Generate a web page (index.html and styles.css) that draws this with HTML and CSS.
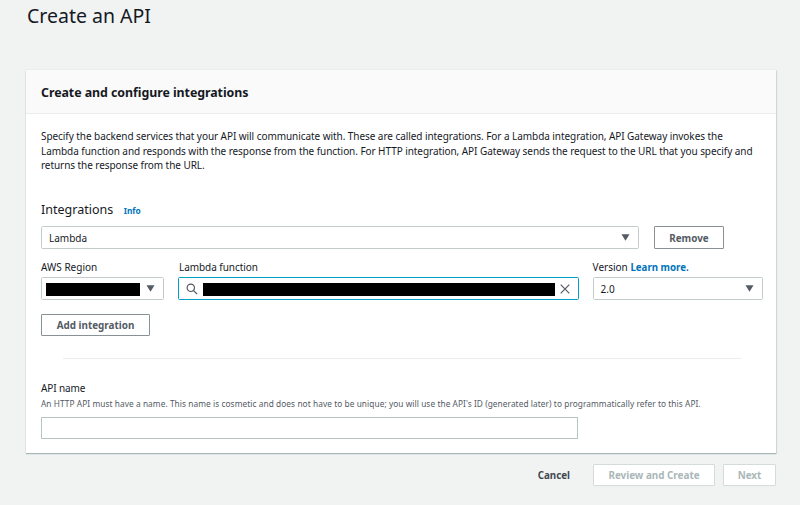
FILE: index.html
```html
<!DOCTYPE html>
<html lang="en">
<head>
<meta charset="utf-8">
<title>Create an API</title>
<link rel="stylesheet" href="styles.css">
</head>
<body>
<main class="page">
  <h1 class="page-title">Create an API</h1>
  <section class="card">
    <header class="card-header"><h2>Create and configure integrations</h2></header>
    <div class="card-body">
      <p class="intro">Specify the backend services that your API will communicate with. These are called integrations. For a Lambda integration, API Gateway invokes the<br>Lambda function and responds with the response from the function. For HTTP integration, API Gateway sends the request to the URL that you specify and<br>returns the response from the URL.</p>
      <div class="section-title"><h3>Integrations</h3><a class="info">Info</a></div>
      <div class="type-row">
        <div class="field select"><span>Lambda</span><svg class="caret" viewBox="0 0 8 7"><path d="M0 .3h8L4 6.7z"/></svg></div>
        <button class="btn remove">Remove</button>
      </div>
      <div class="config-row">
        <div>
          <div class="label">AWS Region</div>
          <div class="field select region"><i class="redacted"></i><svg class="caret" viewBox="0 0 8 7"><path d="M0 .3h8L4 6.7z"/></svg></div>
        </div>
        <div>
          <div class="label fn-label">Lambda function</div>
          <div class="field search"><svg class="glass" viewBox="0 0 12 12"><circle cx="4.8" cy="4.8" r="3.7"/><path d="M7.5 7.5l3.6 3.6"/></svg><i class="redacted"></i><svg class="clear" viewBox="0 0 10 10"><path d="M.7.7l8.6 8.6M9.3.7L.7 9.3"/></svg></div>
        </div>
        <div>
          <div class="label">Version <a class="learn">Learn more.</a></div>
          <div class="field select"><span>2.0</span><svg class="caret" viewBox="0 0 8 7"><path d="M0 .3h8L4 6.7z"/></svg></div>
        </div>
      </div>
      <button class="btn add">Add integration</button>
      <hr class="divider">
      <div class="label api-label">API name</div>
      <p class="hint">An HTTP API must have a name. This name is cosmetic and does not have to be unique; you will use the API's ID (generated later) to programmatically refer to this API.</p>
      <div class="field api-input"></div>
    </div>
  </section>
  <footer class="actions">
    <a class="cancel">Cancel</a>
    <button class="btn disabled review">Review and Create</button>
    <button class="btn disabled next">Next</button>
  </footer>
</main>
</body>
</html>
```

FILE: styles.css
```css
* { box-sizing: border-box; }
body {
  margin: 0;
  height: 505px;
  overflow: hidden;
  background: #f1f3f3;
  color: #16191f;
  font: 10px/15px "Noto Sans", sans-serif;
  white-space: nowrap;
}
h1, h2, h3, p { margin: 0; font-weight: 400; }
.page { padding: 0 24px 0 26px; }
.page-title { height: 70px; padding: 4px 0 0 1px; font-size: 19.5px; line-height: 24px; }
.card {
  height: 383px;
  background: #fff;
  box-shadow: 0 1px 1px #aab7b8, 1px 1px 1px #d5dbdb, 0 0 0 .5px #e3e7e7;
}
.card-header { height: 44px; padding: 13px 15px 0; background: #fafafa; border-bottom: 1px solid #eaeded; }
.card-header h2 { font-size: 12.4px; line-height: 20px; font-weight: 700; letter-spacing: -.055px; }
.card-body { padding: 15px 14px 0 15px; }
.intro { height: 73px; font-size: 10px; line-height: 14.6px; letter-spacing: -.062px; }
.section-title { display: flex; height: 24px; gap: 10.5px; align-items: flex-start; }
.section-title h3 { font-size: 12.5px; line-height: 16px; }
.info { color: #0073bb; font-size: 8.3px; line-height: 17px; font-weight: 700; }
.type-row { display: grid; grid-template-columns: 598px 70px; column-gap: 15px; height: 34px; }
.field {
  display: flex;
  align-items: center;
  height: 23px;
  border: 1px solid #c3cccc;
  border-radius: 1.5px;
  background: #fff;
}
.field span { padding-top: 1px; }
.select { justify-content: space-between; padding: 0 8px 0 7px; }
.caret { width: 9px; height: 7px; fill: #545b64; }
.btn {
  height: 22px;
  padding: 0;
  border: 1px solid #879196;
  border-radius: 1px;
  background: #fff;
  color: #545b64;
  font: 700 9.9px/20px "Noto Sans", sans-serif;
}
.remove { height: 23px; padding-top: 1px; line-height: 20px; }
.config-row { display: grid; grid-template-columns: 123px 401px 170px; column-gap: 14px; height: 54px; }
.config-row > :last-child { margin-left: -.4px; margin-right: .4px; }
.label { height: 17px; line-height: 14px; }
.fn-label { padding-left: 1px; letter-spacing: -.06px; }
.learn { color: #0073bb; font-size: 9.7px; font-weight: 700; }
.redacted { height: 13px; margin-top: 1px; background: #000; }
.region { padding-left: 4px; }
.region .redacted { width: 94px; }
.search { padding: 0 8px 0 7px; border-color: #00a1c9; }
.glass { width: 12px; height: 12px; margin-right: 5px; fill: none; stroke: #545b64; stroke-width: 1.2; }
.search .redacted { width: 352px; margin-right: 5px; }
.clear { width: 10px; height: 10px; fill: none; stroke: #545b64; stroke-width: 1.2; }
.add { display: block; width: 109px; }
.divider { height: 1px; margin: 22px 21px 22px 22px; border: 0; background: #eaeded; }
.api-label { height: 17px; line-height: 15px; letter-spacing: -.1px; }
.hint { height: 19px; color: #545b64; font-size: 8.3px; line-height: 12px; letter-spacing: .069px; }
.api-input { width: 537px; height: 22px; border-radius: 0; border-color: #b8c3c3; }
.actions { display: flex; justify-content: flex-end; padding-top: 11px; line-height: 23px; }
.cancel { margin-right: 23px; color: #414750; font-size: 9.8px; font-weight: 700; }
.disabled { border-color: #d5dbdb; color: #aab7b8; }
.review { width: 122px; margin-right: 8px; }
.next { width: 53px; }
```
